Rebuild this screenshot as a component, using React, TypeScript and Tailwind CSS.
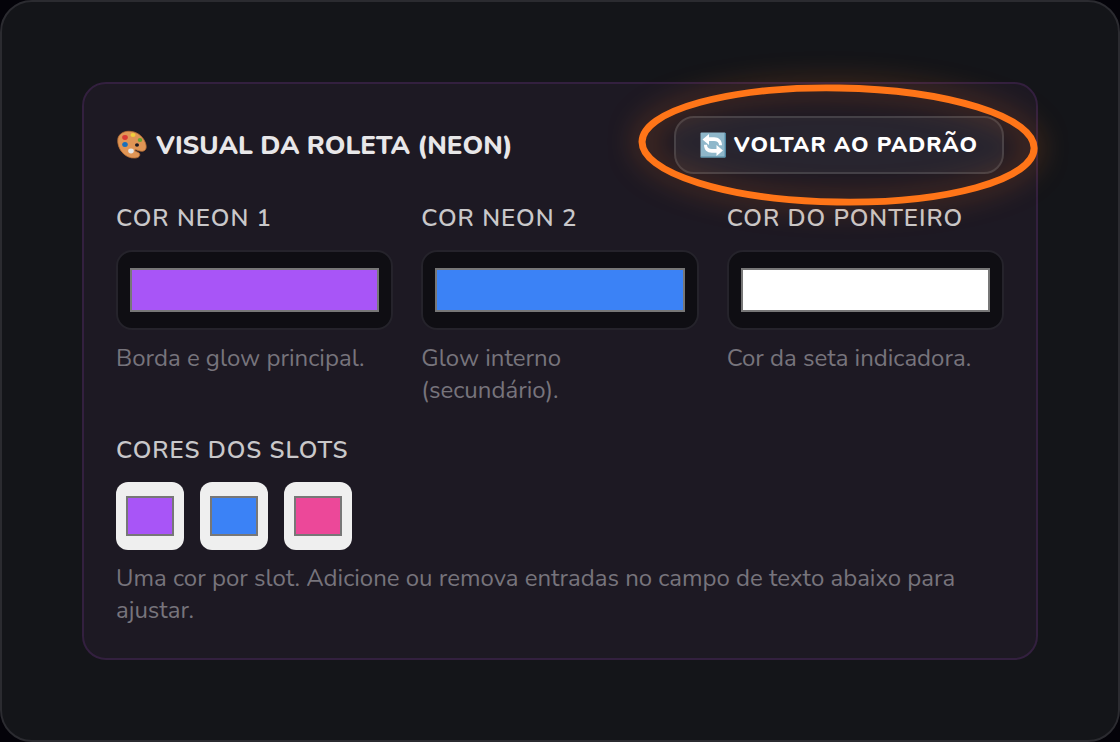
import React, { useState } from 'react';

interface NeonField {
  id: string;
  label: string;
  hint: string;
  color: string;
}

const defaultFields: NeonField[] = [
  { id: 'neon-1', label: 'COR NEON 1', hint: 'Borda e glow principal.', color: '#a855f7' },
  { id: 'neon-2', label: 'COR NEON 2', hint: 'Glow interno (secundário).', color: '#3b82f6' },
  { id: 'pointer', label: 'COR DO PONTEIRO', hint: 'Cor da seta indicadora.', color: '#ffffff' }
];

const defaultSlots = ['#a855f7', '#3b82f6', '#ec4899'];

function PaletteIcon() {
  return (
    <svg viewBox="0 0 32 32" className="size-8 shrink-0" aria-hidden="true">
      <path
        d="M2 9C4 3 11 1 18 3c7 2 11 8 12 13 1 5-2 7-6 6-2 0-4-2-5-1s3 2 4 3c2 2 0 5-4 5C9 30 0 19 2 9Z"
        fill="#e09555"
        stroke="#b86f35"
        strokeWidth="0.8"
      />
      <ellipse cx="21" cy="16" rx="2" ry="1.8" fill="#1d1923" />
      <ellipse cx="9" cy="8.5" rx="2.8" ry="2.4" fill="#d93a35" />
      <ellipse cx="17" cy="6" rx="2.5" ry="2" fill="#f0cf3c" />
      <ellipse cx="24" cy="11" rx="2.3" ry="2" fill="#69a434" />
      <ellipse cx="9" cy="15.5" rx="2.8" ry="2.5" fill="#1670bd" />
      <ellipse cx="15" cy="22" rx="2.8" ry="2.4" fill="#e6e6e6" />
    </svg>
  );
}

function ResetIcon() {
  return (
    <svg viewBox="0 0 26 26" className="size-[26px] shrink-0" aria-hidden="true">
      <rect x="0.5" y="0.5" width="25" height="25" rx="1" fill="#8fb8cb" />
      <path d="M0.5 25h25M25.2 1v24" stroke="#4e8ba8" strokeWidth="1.2" />
      <path d="M2.5 7.5 9 2v3.3h5c5 0 8 3 8 8h-3c0-3-2-4.300-5-4.300H9V13Z" fill="#fff" />
      <path d="M23 18.5 16.5 24v-3.300H12c-5 0-8-3-8-8h3c0 3 2 4.300 5 4.300h4.500V13Z" fill="#fff" />
    </svg>
  );
}

export default function App() {
  const [fields, setFields] = useState<NeonField[]>(defaultFields);
  const [slots, setSlots] = useState<string[]>(defaultSlots);

  const handleReset = () => {
    setFields(defaultFields);
    setSlots(defaultSlots);
  };

  const updateField = (id: string, color: string) => {
    setFields(fields.map((field) => (field.id === id ? { ...field, color } : field)));
  };

  const updateSlot = (index: number, color: string) => {
    setSlots(slots.map((slot, i) => (i === index ? color : slot)));
  };

  return (
    <div className="min-h-screen bg-[#040309] flex font-['Nunito','Open_Sans',sans-serif]">
      <main className="flex-1 rounded-[32px] border-2 border-[#2b2b30] bg-[#141519] p-20">
        <section className="rounded-3xl border-2 border-[#33203f] bg-[#1d1923] p-8">
          {/* Header */}
          <div className="flex items-center justify-between mb-7">
            <h2 className="flex items-center gap-2 text-[26px] font-extrabold text-[#e8e7e9]">
              <PaletteIcon />
              VISUAL DA ROLETA (NEON)
            </h2>
            <div className="relative">
              <button
                type="button"
                onClick={handleReset}
                className="flex h-[58px] items-center gap-2 rounded-[20px] border-2 border-[#424048] bg-[#28252f] px-6 text-[22px] font-extrabold tracking-[1px] text-white"
              >
                <ResetIcon />
                VOLTAR AO PADRÃO
              </button>
              {/* Highlight ring */}
              <svg
                viewBox="0 0 400 124"
                preserveAspectRatio="none"
                className="pointer-events-none absolute -inset-x-9 -inset-y-8 h-[122px] w-[calc(100%+72px)] overflow-visible drop-shadow-[0_0_14px_rgba(255,117,24,0.5)]"
                aria-hidden="true"
              >
                <ellipse cx="199" cy="62" rx="195" ry="58" fill="none" stroke="#ff7518" strokeWidth="7" transform="rotate(1 199 62)" />
              </svg>
            </div>
          </div>

          {/* Neon colors */}
          <div className="grid grid-cols-3 gap-7 mb-7">
            {fields.map((field) => (
              <div key={field.id}>
                <label htmlFor={field.id} className="block mb-4 text-2xl font-semibold tracking-[1px] text-[#c9c8ca]">
                  {field.label}
                </label>
                <input
                  id={field.id}
                  type="color"
                  value={field.color}
                  onChange={(e) => updateField(field.id, e.target.value)}
                  className="block h-20 w-full appearance-none rounded-2xl border-2 border-[#25232b] bg-[#0f0e13] px-3 py-4 [&::-webkit-color-swatch-wrapper]:p-0 [&::-webkit-color-swatch]:rounded-none [&::-webkit-color-swatch]:border-2 [&::-webkit-color-swatch]:border-[#777777]"
                />
                <p className="mt-3 text-2xl text-[#77747c]">{field.hint}</p>
              </div>
            ))}
          </div>

          {/* Slot colors */}
          <fieldset>
            <legend className="mb-4 text-2xl font-semibold tracking-[1px] text-[#c9c8ca]">CORES DOS SLOTS</legend>
            <div className="flex gap-4">
              {slots.map((slot, index) => (
                <input
                  key={index}
                  type="color"
                  aria-label={`Slot ${index + 1}`}
                  value={slot}
                  onChange={(e) => updateSlot(index, e.target.value)}
                  className="block size-[68px] appearance-none rounded-xl bg-[#efefef] px-2.5 py-3.5 [&::-webkit-color-swatch-wrapper]:p-0 [&::-webkit-color-swatch]:rounded-none [&::-webkit-color-swatch]:border-2 [&::-webkit-color-swatch]:border-[#777777]"
                />
              ))}
            </div>
            <p className="mt-3 text-2xl text-[#77747c]">
              Uma cor por slot. Adicione ou remova entradas no campo de texto abaixo para ajustar.
            </p>
          </fieldset>
        </section>
      </main>
    </div>
  );
}
